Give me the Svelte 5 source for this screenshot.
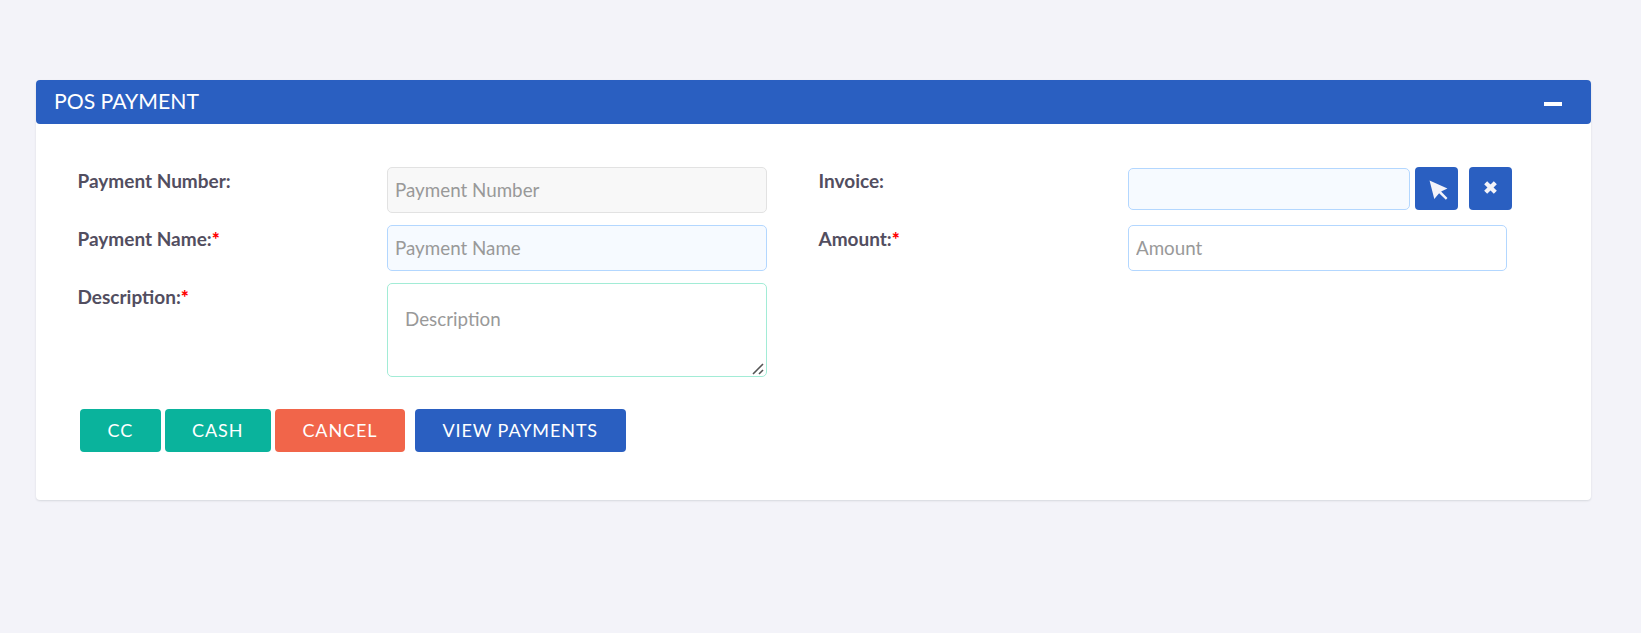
<script>
	const buttons = [
		{ label: "CC", cls: "teal" },
		{ label: "CASH", cls: "teal" },
		{ label: "CANCEL", cls: "orange" },
		{ label: "VIEW PAYMENTS", cls: "blue" }
	];
</script>

<div class="page">
	<section class="card">
		<header class="card-head">
			<h2>POS PAYMENT</h2>
			<button class="collapse" aria-label="Collapse"><span></span></button>
		</header>

		<div class="card-body">
			<div class="form">
				<div class="col">
					<div class="row">
						<label for="num">Payment Number:</label>
						<input id="num" class="disabled" placeholder="Payment Number" readonly />
					</div>
					<div class="row">
						<label for="name">Payment Name:<b>*</b></label>
						<input id="name" class="tinted" placeholder="Payment Name" />
					</div>
					<div class="row">
						<label for="desc">Description:<b>*</b></label>
						<div class="area">
							<textarea id="desc" placeholder="Description"></textarea>
							<svg class="grip" width="12" height="12" viewBox="0 0 12 12">
								<path d="M1 11 L11 1 M7 11 L11 7" stroke="#555" stroke-width="1.6" />
							</svg>
						</div>
					</div>
				</div>

				<div class="col">
					<div class="row">
						<label for="inv">Invoice:</label>
						<div class="invoice">
							<input id="inv" class="tinted short" />
							<button class="icon-btn first" aria-label="Pick invoice">
								<svg width="19" height="20" viewBox="0 0 18 19">
									<path d="M0.5 0.5 L17.5 8 L11.5 11 L17.5 17.2 L16 18.8 L9.6 12.6 L5 18 Z" fill="#f3f3f9" />
								</svg>
							</button>
							<button class="icon-btn second" aria-label="Clear invoice">
								<svg width="15" height="15" viewBox="0 0 14 14">
									<path d="M2.5 2.5 L11.5 11.5 M11.5 2.5 L2.5 11.5" stroke="#f3f3f9" stroke-width="4" />
								</svg>
							</button>
						</div>
					</div>
					<div class="row">
						<label for="amt">Amount:<b>*</b></label>
						<input id="amt" class="wide" placeholder="Amount" />
					</div>
				</div>
			</div>

			<div class="actions">
				{#each buttons as btn}
					<button class={btn.cls}>{btn.label}</button>
				{/each}
			</div>
		</div>
	</section>
</div>

<style>
	:global(body) {
		background: #f3f3f9;
		font-family: "Lato", sans-serif;
	}

	.page {
		height: 633px;
		box-sizing: border-box;
		padding: 80px 50px 0 36px;
	}

	.card {
		background: #fff;
		border-radius: 4px;
		box-shadow: 0 1px 2px rgba(56, 65, 74, 0.15);
	}

	.card-head {
		height: 44px;
		box-sizing: border-box;
		display: flex;
		align-items: center;
		justify-content: space-between;
		padding: 0 29px 2px 18px;
		background: #2a5fc1;
		border-radius: 4px;
	}

	h2 {
		margin: 0;
		font-size: 21.2px;
		font-weight: 400;
		color: #fff;
	}

	.collapse {
		padding: 5px 0 0;
		border: 0;
		background: none;
		display: flex;
	}

	.collapse span {
		width: 18px;
		height: 4px;
		background: #fff;
	}

	.card-body {
		padding: 43px 42px 48px;
	}

	.form {
		display: grid;
		grid-template-columns: 741px 1fr;
	}

	.col {
		display: flex;
		flex-direction: column;
		gap: 12px;
	}

	.row {
		display: grid;
		grid-template-columns: 309px 1fr;
		align-items: start;
	}

	label {
		margin-left: -0.5px;
		font-size: 19px;
		line-height: 28px;
		font-weight: 700;
		color: #524e60;
	}

	label b {
		color: #f00;
	}

	input,
	textarea {
		display: block;
		box-sizing: border-box;
		width: 380px;
		height: 46px;
		padding: 0 7px 2px;
		font: 400 18.8px "Lato", sans-serif;
		color: #333;
		background: #fff;
		border: 1px solid #b3d7ff;
		border-radius: 5px;
		outline: none;
	}

	input::placeholder,
	textarea::placeholder {
		color: #999;
		opacity: 1;
	}

	.disabled {
		background: #f8f8f8;
		border-color: #e2e2e2;
	}

	.tinted {
		background: #f6faff;
	}

	.wide {
		width: 379px;
	}

	.area {
		position: relative;
		width: 380px;
	}

	textarea {
		height: 94px;
		padding: 24px 17px;
		line-height: 22px;
		border-color: #a2ecd6;
		resize: none;
	}

	.grip {
		position: absolute;
		right: 3px;
		bottom: 2px;
	}

	.invoice {
		display: flex;
		align-items: flex-start;
		height: 46px;
	}

	.short {
		width: 282px;
		height: 42px;
		margin: 1px 5px 0 0;
	}

	.icon-btn {
		display: flex;
		box-sizing: border-box;
		width: 43px;
		height: 43px;
		padding: 13px 0 0 14px;
		border: 0;
		border-radius: 4px;
		background: #2a5fc1;
	}

	.icon-btn.first {
		margin-right: 11px;
	}

	.actions {
		display: flex;
		margin: 32px 0 0 2px;
		gap: 4px;
	}

	.actions button {
		height: 43px;
		padding: 0 27.5px 2px;
		border: 0;
		border-radius: 4px;
		font: 400 18px "Lato", sans-serif;
		letter-spacing: 0.9px;
		color: #fff;
	}

	.teal {
		background: #0ab39c;
	}

	.orange {
		background: #f1654a;
	}

	.actions .blue {
		margin-left: 6px;
		background: #2a5fc1;
	}
</style>
